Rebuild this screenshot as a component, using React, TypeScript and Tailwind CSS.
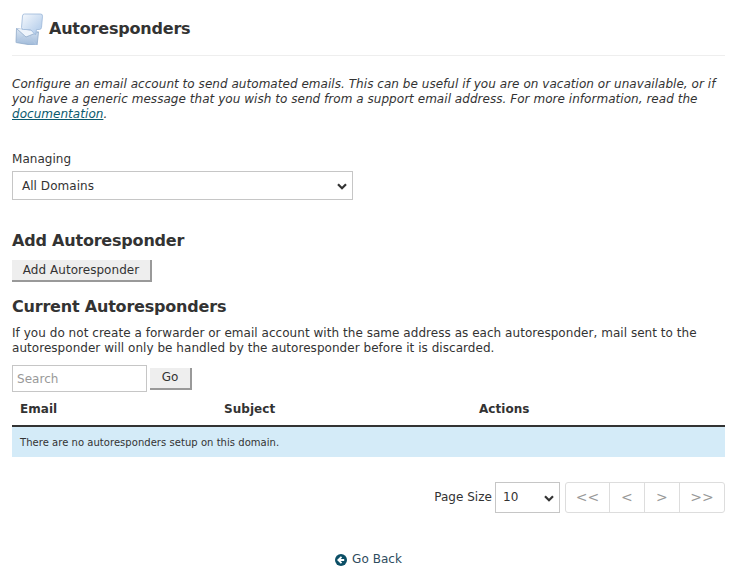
import React from "react";

function Icon() {
  return (
    <svg width="32" height="34" viewBox="0 0 32 34" className="shrink-0">
      <defs>
        <linearGradient id="bub" x1="0" y1="0" x2="1" y2="1">
          <stop offset="0" stopColor="#f6f9fd" />
          <stop offset="1" stopColor="#a9c6e8" />
        </linearGradient>
        <linearGradient id="env" x1="0" y1="0" x2="0" y2="1">
          <stop offset="0" stopColor="#dbe6f3" />
          <stop offset="1" stopColor="#9db8d8" />
        </linearGradient>
      </defs>
      <path d="M2.5 17.5 L24.5 21 L23 35 L2 31.5 Z" fill="url(#env)" stroke="#8fa9c9" strokeWidth="0.8" />
      <path d="M2.5 17.5 L12 26 L24.5 21" fill="#eef4fb" stroke="#8fa9c9" strokeWidth="0.8" />
      <path d="M2 31.5 L10.5 24.5 M23 35 L15.5 24.5" stroke="#b4c9e2" strokeWidth="0.8" fill="none" />
      <path d="M8.5 5 Q8.5 3 10.5 3 L26.5 3 Q28.7 3 28.5 5.2 L27.5 16.5 Q27.3 18.5 25.3 18.5 L22.5 18.5 L21.5 24 L16.5 18.5 L9.5 18.5 Q7.5 18.5 7.5 16.5 Z" fill="url(#bub)" stroke="#9cb8d9" strokeWidth="0.8" />
    </svg>
  );
}

function Chevron() {
  return (
    <svg width="10" height="7" viewBox="0 0 10 7" className="absolute pointer-events-none right-[5px] top-1/2 -mt-[3px]">
      <path d="M1 1.2 L5 5.2 L9 1.2" fill="none" stroke="#333" strokeWidth="2.2" />
    </svg>
  );
}

export default function App() {
  return (
    <div className="w-[741px] h-[572px] overflow-hidden bg-white px-3 text-[12px] leading-[15px] tracking-[0.04px] text-[#333] font-['Verdana','DejaVu_Sans',sans-serif]">
      <div className="w-[713px]">
        <div className="flex items-center gap-[3px] h-[56px] border-b border-[#eeeeee] pl-[2px]">
          <Icon />
          <h1 className="pt-[2px] text-[16px] font-bold leading-5 tracking-[-0.2px] text-[#333]">Autoresponders</h1>
        </div>

        <p className="mt-[21px] italic">
          Configure an email account to send automated emails. This can be useful if you are on vacation or unavailable, or if you have a generic message that you wish to send from a support email address. For more information, read the{" "}
          <a className="underline text-[#0c5a6e]">documentation</a>.
        </p>

        <div className="mt-[30px]">Managing</div>
        <div className="relative mt-[4px] w-[341px] h-[29px] border border-[#c6c6c6] flex items-center pl-[9px] pt-[1px]">
          All Domains
          <Chevron />
        </div>

        <h2 className="mt-[31px] text-[16px] font-bold leading-5 tracking-[-0.2px]">Add Autoresponder</h2>
        <button className="mt-[9px] block h-[22px] w-[140px] bg-[#eeeeee] border-r-2 border-b-2 border-[#999999] text-[12px] text-[#333]">
          Add Autoresponder
        </button>

        <h2 className="mt-[15px] text-[16px] font-bold leading-5 tracking-[-0.2px]">Current Autoresponders</h2>
        <p className="mt-[9px]">
          If you do not create a forwarder or email account with the same address as each autoresponder, mail sent to the autoresponder will only be handled by the autoresponder before it is discarded.
        </p>

        <div className="mt-[9px] flex items-center gap-[3px]">
          <div className="w-[135px] h-[27px] border border-[#c6c6c6] flex items-center pl-[4px] pt-[1px] text-[#999999]">Search</div>
          <button className="h-[22px] w-[42px] bg-[#eeeeee] border-r-2 border-b-2 border-[#999999] text-[12px] text-[#333]">Go</button>
        </div>

        <div className="grid grid-cols-[204px_255px_1fr] h-[35px] items-center border-b-2 border-[#333] font-bold text-[12px] pl-2 pt-[1px]">
          <div>Email</div>
          <div>Subject</div>
          <div>Actions</div>
        </div>
        <div className="h-[30px] bg-[#d4ebf8] flex items-center pl-2 pt-[1px] text-[10px]">
          There are no autoresponders setup on this domain.
        </div>

        <div className="mt-[25px] flex items-center justify-end">
          <span className="mr-[3px]">Page Size</span>
          <div className="relative w-[65px] h-[31px] border border-[#c6c6c6] flex items-center pl-[7px]">
            10
            <Chevron />
          </div>
          <div className="ml-[5px] flex h-[31px] border border-[#dddddd] rounded-[3px] text-[#999999] text-[14px]">
            <span className="w-[44px] flex items-center justify-center border-r border-[#dddddd]">&lt;&lt;</span>
            <span className="w-[35px] flex items-center justify-center border-r border-[#dddddd]">&lt;</span>
            <span className="w-[35px] flex items-center justify-center border-r border-[#dddddd]">&gt;</span>
            <span className="w-[44px] flex items-center justify-center">&gt;&gt;</span>
          </div>
        </div>

        <div className="mt-[39px] flex items-center justify-center gap-[5px] text-[#2e4c5e]">
          <svg width="12" height="12" viewBox="0 0 12 12">
            <circle cx="6" cy="6" r="6" fill="#0c4f66" />
            <path d="M6.5 2.8 L3.3 6 L6.5 9.2 M3.5 6 H9.2" fill="none" stroke="#fff" strokeWidth="1.8" />
          </svg>
          <span>Go Back</span>
        </div>
      </div>
    </div>
  );
}
